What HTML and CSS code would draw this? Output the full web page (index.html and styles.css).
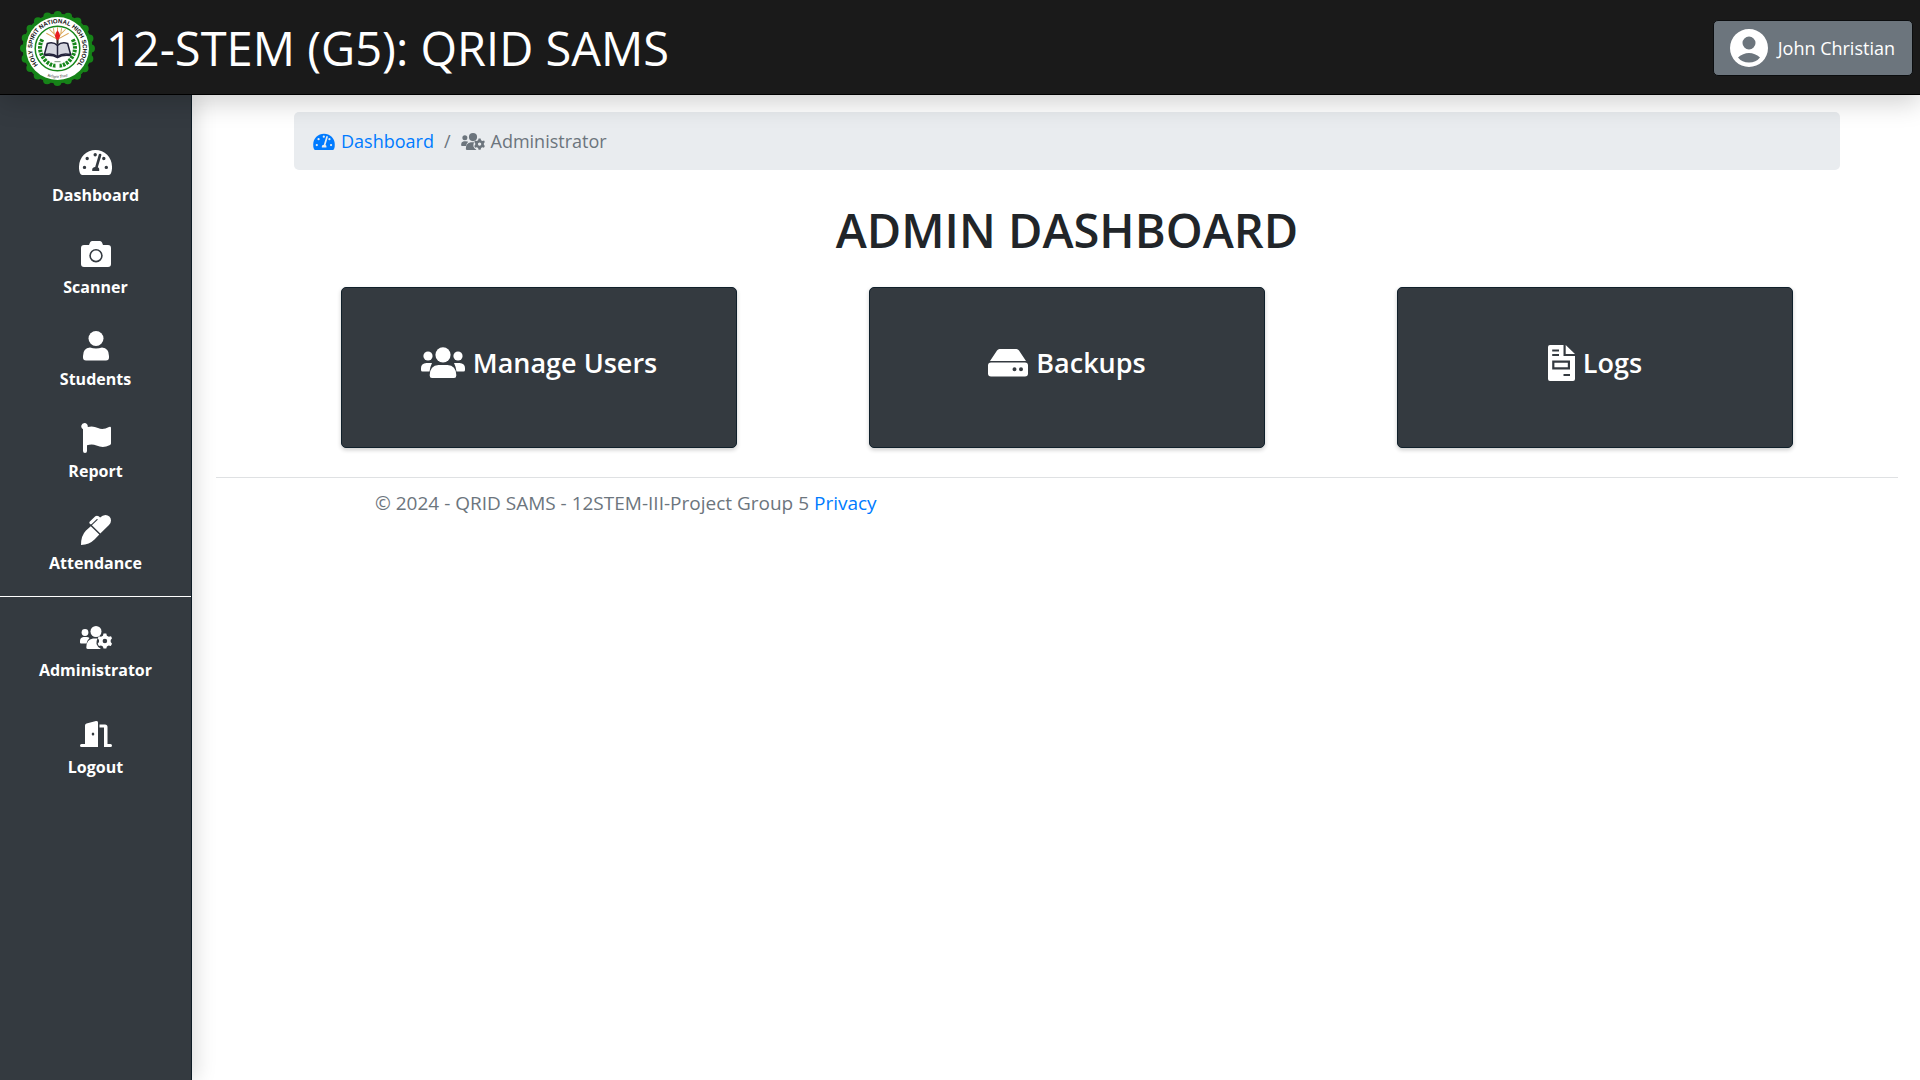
FILE: index.html
```html
<!DOCTYPE html>
<html lang="en">
<head>
<meta charset="utf-8">
<title>QRID SAMS - Admin Dashboard</title>
<link rel="stylesheet" href="styles.css">
</head>
<body>
<svg class="sprite" width="0" height="0" aria-hidden="true">
  <defs>
    <symbol id="gauge" viewBox="0 0 33 26">
      <path fill-rule="evenodd" d="M3.200 26Q1.700 26 1 24.200A16.400 16.400 0 0 1 0 17.500A16.500 16.500 0 0 1 33 17.500A16.400 16.400 0 0 1 32 24.200Q31.300 26 29.800 26ZM13.200 22H20.200V20Q20.200 18.700 18.800 18.200L22.300 6.400A1.300 1.300 0 0 0 19.800 5.600L16.200 17.900Q13.200 18.400 13.200 20.400ZM5.500 16.700A1.700 1.700 0 1 0 5.500 20.100A1.700 1.700 0 1 0 5.500 16.700ZM8.200 7.800A1.700 1.700 0 1 0 8.200 11.200A1.700 1.700 0 1 0 8.200 7.800ZM16.200 4A1.700 1.700 0 1 0 16.200 7.400A1.700 1.700 0 1 0 16.200 4ZM24.800 7.800A1.700 1.700 0 1 0 24.800 11.200A1.700 1.700 0 1 0 24.800 7.800ZM27.300 16.700A1.700 1.700 0 1 0 27.300 20.100A1.700 1.700 0 1 0 27.300 16.700Z"/>
    </symbol>
    <symbol id="camera" viewBox="0 0 30 26">
      <path fill-rule="evenodd" d="M3 4H8L9 1.500Q9.600 0 11 0H19Q20.400 0 21 1.500L22 4H27Q30 4 30 7V23Q30 26 27 26H3Q0 26 0 23V7Q0 4 3 4ZM15 8A6.700 6.700 0 1 0 15 21.400A6.700 6.700 0 1 0 15 8ZM15 9.600A5.100 5.100 0 1 1 15 19.800A5.100 5.100 0 1 1 15 9.600Z"/>
    </symbol>
    <symbol id="user" viewBox="0 0 26 30">
      <circle cx="13" cy="7.500" r="7.500"/><path d="M7 16.500Q13 18.500 19 16.500Q26 17 26 25V26.500Q26 29.500 23 29.500H3Q0 29.500 0 26.500V25Q0 17 7 16.500Z"/>
    </symbol>
    <symbol id="flag" viewBox="0 0 30 30">
      <path d="M3.500 0A3.300 3.300 0 0 1 6.700 4Q12 2.500 17 5Q22 7.200 28 4Q30 3.200 30 5V20.500Q30 21.800 28.500 22.300Q22 25.500 15.500 22.500Q11 20.800 6 22.300V28Q6 30 4 30T2 28V6.200A3.300 3.300 0 0 1 3.500 0Z"/>
    </symbol>
    <symbol id="pen" viewBox="0 0 30 30">
      <path d="M0 30Q0 20.500 5 15.500L9.800 11.300L18.300 19.400L13.500 24.500Q8.500 29.500 0 30ZM19.300 18.400L10.900 10.300L17 4.600L15.900 3.900L10.700 8.900Q9.700 9.600 8.800 8.700T8.600 6.700L14.300 1.200Q16 .1 17.700 1.300L19.100 2.500Q21.500 0 24.500 0A5.500 5.500 0 0 1 30 5.500Q30 8 28 10Z"/>
    </symbol>
    <symbol id="users-gear" viewBox="0 0 32 23">
      <circle cx="5" cy="6.500" r="3.400"/><circle cx="16" cy="5.500" r="5.500"/>
      <path d="M3.500 11H6.500Q8.500 11 9.500 12Q7 14.500 6.600 17.500H1Q0 17.500 0 16.500V15Q0 11.500 3.500 11ZM13 12.500H17.500Q16 15.500 16.500 18Q17.500 21 20.500 22.500L20.500 23H8Q6.300 23 6.300 21.500Q6.300 13.500 13 12.500Z"/>
      <path fill-rule="evenodd" d="M23.500 7.500H26.300L26.900 9.700L28.800 10.700L31 10.200L32 12.300L30.700 14V16L32 17.700L30.800 19.900L28.700 19.400L26.900 20.400L26.300 22.500H23.500L22.900 20.400L21 19.400L18.900 19.900L17.700 17.700L19 16V14L17.700 12.300L18.800 10.200L21 10.700L22.900 9.700ZM24.900 12.700A2.300 2.300 0 1 0 24.900 17.300A2.300 2.300 0 1 0 24.900 12.700Z"/>
    </symbol>
    <symbol id="door" viewBox="0 0 32 26">
      <path fill-rule="evenodd" d="M1.500 23H5V4.500Q5 3 6.500 2.500L16 .1Q18 0 18 1.500V26H1.500Q0 26 0 24.500T1.500 23ZM13 11.500A1.300 1.500 0 1 0 13 14.500A1.300 1.500 0 1 0 13 11.500ZM19.500 3.500H25Q27.500 3.500 27.500 6V23H30.500Q32 23 32 24.500T30.500 26H24V6.500H19.500Z"/>
    </symbol>
    <symbol id="users" viewBox="0 0 44 32">
      <circle cx="7" cy="9" r="4.600"/><circle cx="37" cy="9" r="4.600"/><circle cx="22" cy="7.800" r="7.600"/>
      <path d="M5.500 16H11Q9 20 8.500 24.500H1.500Q0 24.500 0 23V21Q0 16.500 5.500 16ZM33 16H38.500Q44 16.500 44 21V23Q44 24.500 42.500 24.500H35.500Q35 20 33 16ZM17.500 18H26.500Q35 18.500 35.300 28V28.500Q35.300 31 33 31H11Q8.700 31 8.700 28.500V28Q9 18.500 17.500 18Z"/>
    </symbol>
    <symbol id="drive" viewBox="0 0 40 28">
      <path fill-rule="evenodd" d="M9 1.500Q10 0 11.500 0H28.500Q30 0 31 1.500L38 12H2ZM3 13.500H37Q40 13.500 40 16.500V24.500Q40 27.500 37 27.500H3Q0 27.500 0 24.500V16.500Q0 13.500 3 13.500ZM26.500 18.300A2 2 0 1 0 26.500 22.300A2 2 0 1 0 26.500 18.300ZM33 18.300A2 2 0 1 0 33 22.300A2 2 0 1 0 33 18.300Z"/>
    </symbol>
    <symbol id="file" viewBox="0 0 27 36">
      <path fill-rule="evenodd" d="M2 0H15.500V11H27V34Q27 36 25 36H2Q0 36 0 34V2Q0 0 2 0ZM4.200 4.500V6.500H11V4.500ZM4.200 9V11H11V9ZM4.200 15.500V24.500H22V15.500ZM6.400 17.700H19.800V22.300H6.400ZM15.500 29V31H22V29ZM17.700 0L27 9H17.700Z"/>
    </symbol>
    <symbol id="avatar" viewBox="0 0 38 38">
      <path fill-rule="evenodd" d="M19 0A19 19 0 1 0 19 38A19 19 0 1 0 19 0ZM19 7.500A6.500 6.500 0 1 1 19 20.500A6.500 6.500 0 1 1 19 7.500ZM8 28.500Q13 24 19 24T30 28.500Q26 33.600 19 33.600T8 28.500Z"/>
    </symbol>
  </defs>
</svg>

<header class="topbar">
  <a class="brand" href="#">
    <svg class="seal" viewBox="0 0 78 74" role="img" aria-label="School seal">
      <circle cx="39" cy="37" r="34.500" fill="#168318"/>
      <circle cx="39" cy="37" r="33" fill="none" stroke="#168318" stroke-width="8" stroke-dasharray="0 10.367" stroke-linecap="round"/>
      <circle cx="39" cy="37" r="31" fill="#fff"/>
      <circle cx="39" cy="37" r="22" fill="none" stroke="#17871b" stroke-width="1.500"/>
      <path id="ring" d="M24 57A25 25 0 1 1 54 57" fill="none"/>
      <path id="ring-low" d="M28 64Q39 68 50 64" fill="none"/>
      <text class="seal-name"><textPath href="#ring" startOffset="50%">HOLY SPIRIT NATIONAL HIGH SCHOOL</textPath></text>
      <text class="seal-motto"><textPath href="#ring-low" startOffset="50%">"Religio Trust"</textPath></text>
      <path d="M24 28Q18 39 28 50Q33 54 37 54M54 28Q60 39 50 50Q45 54 41 54" fill="none" stroke="#17871b" stroke-width="4" stroke-dasharray="2.500 1"/>
      <path d="M39 28L28 22M39 26L31 18M39 24L39 16M39 26L47 18M39 28L50 22M36 24L35 17M42 24L43 17" stroke="#dca85a" stroke-width="1"/>
      <path d="M38 27H40V33H38Z" fill="#222"/>
      <path d="M39 19Q44 25 39 29Q34 25 39 19Z" fill="#e81d20"/>
      <path d="M29 32Q35 30 39 34Q43 30 49 32L52 43Q44 41 39 45Q34 41 26 43Z" fill="#d5d6df" stroke="#22223a" stroke-width="1.500"/>
      <path d="M39 34V45M26 44Q34 43 39 46Q44 43 52 44" fill="none" stroke="#22223a" stroke-width="1.500"/>
      <path d="M36 50H42" stroke="#7a9a7a" stroke-width="1"/>
    </svg>
    <span class="brand-name">12-STEM (G5): QRID SAMS</span>
  </a>
  <button class="account" type="button">
    <svg width="38" height="38" aria-hidden="true"><use href="#avatar"/></svg>
    <span>John Christian</span>
  </button>
</header>

<div class="shell">
  <nav class="sidebar" aria-label="Main">
    <ul class="menu">
      <li><a href="#"><span class="menu-icon"><svg width="33" height="26"><use href="#gauge"/></svg></span>Dashboard</a></li>
      <li><a href="#"><span class="menu-icon"><svg width="30" height="26"><use href="#camera"/></svg></span>Scanner</a></li>
      <li><a href="#"><span class="menu-icon"><svg width="26" height="30"><use href="#user"/></svg></span>Students</a></li>
      <li><a href="#"><span class="menu-icon"><svg width="30" height="30"><use href="#flag"/></svg></span>Report</a></li>
      <li><a href="#"><span class="menu-icon"><svg width="30" height="30"><use href="#pen"/></svg></span>Attendance</a></li>
    </ul>
    <ul class="menu menu-admin">
      <li><a href="#"><span class="menu-icon"><svg width="32" height="23"><use href="#users-gear"/></svg></span>Administrator</a></li>
      <li><a href="#"><span class="menu-icon"><svg width="32" height="26"><use href="#door"/></svg></span>Logout</a></li>
    </ul>
  </nav>

  <div class="page">
    <main class="content">
      <nav aria-label="Breadcrumb">
        <ol class="breadcrumb">
          <li><a href="#"><svg width="22" height="17"><use href="#gauge"/></svg>Dashboard</a></li>
          <li class="current" aria-current="page"><svg width="24" height="17"><use href="#users-gear"/></svg>Administrator</li>
        </ol>
      </nav>
      <h1>ADMIN DASHBOARD</h1>
      <div class="cards">
        <a class="card" href="#"><svg width="44" height="32"><use href="#users"/></svg>Manage Users</a>
        <a class="card" href="#"><svg width="40" height="28"><use href="#drive"/></svg>Backups</a>
        <a class="card" href="#"><svg width="27" height="36"><use href="#file"/></svg>Logs</a>
      </div>
    </main>
    <footer class="footer">© 2024 - QRID SAMS - 12STEM-III-Project Group 5 <a href="#">Privacy</a></footer>
  </div>
</div>
</body>
</html>
```
FILE: styles.css
```css
* { box-sizing: border-box; }

body {
  margin: 0;
  min-height: 100vh;
  display: flex;
  flex-direction: column;
  background: #fff;
  color: #212529;
  font: 18px/28px "Open Sans", "Noto Sans", sans-serif;
}

svg { fill: currentColor; flex: none; }
.sprite { position: absolute; }
ul, ol { margin: 0; padding: 0; list-style: none; }
a { color: #007bff; text-decoration: none; }

.topbar {
  position: relative;
  z-index: 2;
  display: flex;
  align-items: center;
  justify-content: space-between;
  height: 95px;
  padding: 2px 7px 0 18px;
  background: #1a1a1a;
  border-bottom: 1px solid #000;
  box-shadow: 0 8px 24px rgba(0, 0, 0, .18);
}

.brand { display: flex; align-items: center; gap: 9px; color: #fff; }
.brand-name { font-size: 47px; line-height: 64px; }
.seal { width: 79px; height: 75px; }
.seal-name {
  font: bold 6px "Liberation Sans", sans-serif;
  fill: #111;
  text-anchor: middle;
}
.seal-motto {
  font: italic 4px "Liberation Serif", serif;
  fill: #222;
  text-anchor: middle;
}

.account {
  display: flex;
  align-items: center;
  gap: 10px;
  height: 56px;
  padding: 0 17px 0 16px;
  border: 1px solid #0b0d0f;
  border-radius: 5px;
  background: #6c757d;
  color: #fff;
  font: inherit;
}

.shell { display: flex; flex: 1; }

.sidebar {
  width: 10%;
  padding-top: 35px;
  background: #343a40;
  border-right: 1px solid #0e1c26;
  box-shadow: 4px 0 20px rgba(0, 0, 0, .14);
}

.menu a {
  display: flex;
  flex-direction: column;
  align-items: center;
  gap: 5px;
  padding: 16px 0 15px;
  color: #fff;
  font-size: 16px;
  font-weight: 700;
  line-height: 24px;
}
.menu-icon { display: flex; align-items: center; height: 32px; }
.menu-admin {
  margin-top: 6px;
  padding-top: 8px;
  border-top: 1px solid #fff;
}
.menu-admin a { padding-bottom: 20px; }

.page { flex: 1; padding: 17px 22px 0 24px; }
.content { padding: 0 58px 29px 78px; }

.breadcrumb {
  display: flex;
  align-items: center;
  height: 58px;
  padding: 0 19px;
  border-radius: 5px;
  background: #e9ecef;
}
.breadcrumb li, .breadcrumb a { display: flex; align-items: center; gap: 6px; }
.breadcrumb li + li::before { content: "/"; margin: 0 4px 0 10px; }
.current { color: #6c757d; }

h1 {
  margin: 28px 0 25px;
  font-size: 47px;
  font-weight: 600;
  line-height: 64px;
  text-align: center;
}

.cards {
  display: grid;
  grid-template-columns: repeat(3, 1fr);
  gap: 132px;
  padding: 0 47px;
}
.card {
  display: flex;
  align-items: center;
  justify-content: center;
  gap: 8px;
  height: 161px;
  padding-bottom: 10px;
  border: 1px solid #10202b;
  border-radius: 5px;
  background: #343a40;
  box-shadow: 0 2px 4px rgba(0, 0, 0, .2);
  color: #fff;
  font-size: 27px;
  font-weight: 600;
}

.footer {
  padding: 11px 0 12px 159px;
  border-top: 1px solid #dfe1e3;
  color: #6c757d;
  font-size: 19px;
}
```
